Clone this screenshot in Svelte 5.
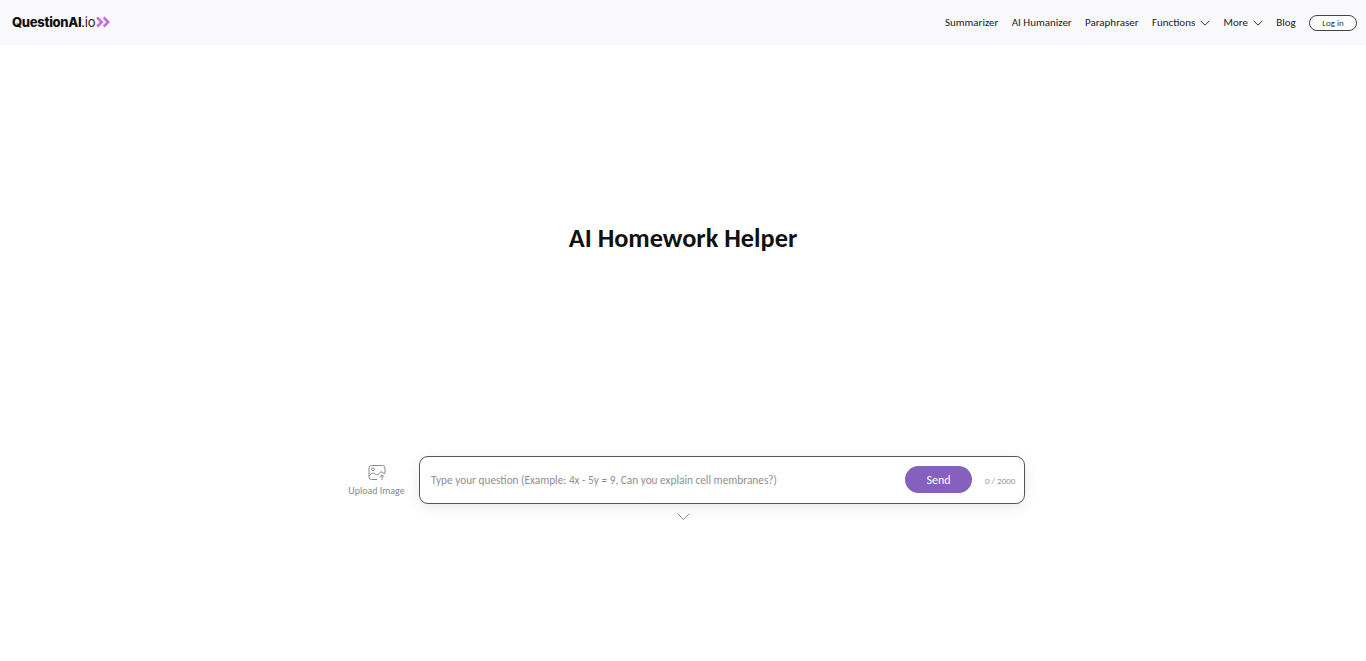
<script>
  const links = [
    { label: 'Summarizer' },
    { label: 'AI Humanizer' },
    { label: 'Paraphraser' },
    { label: 'Functions', menu: true },
    { label: 'More', menu: true },
    { label: 'Blog' }
  ];
</script>

<div class="page">
  <header class="topbar">
    <a class="logo" href="#top">
      <span class="logo-name">QuestionAI</span><span class="logo-tld">.io</span>
      <svg class="logo-mark" width="14" height="12" viewBox="0 0 14 12" aria-hidden="true">
        <path d="M1.200 1.500 5.700 6l-4.500 4.500M7.700 1.500 12.200 6l-4.500 4.500" fill="none" stroke="#c56fdc" stroke-width="2.600" />
      </svg>
    </a>
    <nav class="nav">
      {#each links as link}
        <a class="nav-link" href="#top">
          {link.label}
          {#if link.menu}
            <svg class="caret" width="10" height="6" viewBox="0 0 10 6" aria-hidden="true">
              <path d="M.5.700 5 5.200 9.500.700" fill="none" stroke="#333" stroke-width="1" />
            </svg>
          {/if}
        </a>
      {/each}
      <button class="login" type="button">Log in</button>
    </nav>
  </header>

  <main class="main">
    <h1 class="title">AI Homework Helper</h1>

    <div class="composer-row">
      <div class="upload">
        <svg width="18" height="17" viewBox="0 0 18 16" aria-hidden="true">
          <g fill="none" stroke="#8a8a8a" stroke-width="1">
            <path d="M9 15H3.500A2.500 2.500 0 0 1 1 12.500V3.500A2.500 2.500 0 0 1 3.500 1h11A2.500 2.500 0 0 1 17 3.500V9" />
            <circle cx="5" cy="4.800" r="1.400" />
            <path d="M1 11.500c2-3 4-3.500 6-2s4 .5 6-2.500l4 2.500" />
            <path d="M14 15.500v-5M11.800 12.500 14 10.300l2.200 2.200" />
          </g>
        </svg>
        <span>Upload Image</span>
      </div>

      <div class="composer">
        <span class="placeholder">Type your question (Example: 4x - 5y = 9, Can you explain cell membranes?)</span>
        <button class="send" type="button">Send</button>
        <span class="count">0 / 2000</span>
      </div>
    </div>

    <svg class="more" width="13" height="8" viewBox="0 0 13 8" aria-hidden="true">
      <path d="M.7.700 6.500 6.500 12.300.700" fill="none" stroke="#888" stroke-width="1" />
    </svg>
  </main>
</div>

<style>
  :global(body) {
    margin: 0;
    background: #fff;
    font-family: Carlito, Lato, "Liberation Sans", sans-serif;
  }

  .page {
    height: 661px;
    overflow: hidden;
  }

  .topbar {
    height: 45px;
    background: #f9f9fc;
    display: flex;
    align-items: center;
    justify-content: space-between;
    padding: 0 9px 0 12px;
  }

  .logo {
    display: flex;
    align-items: center;
    font-family: Inter, sans-serif;
    font-size: 13px;
    letter-spacing: -0.3px;
    color: #111;
    text-decoration: none;
    margin-top: -2px;
  }

  .logo-name {
    font-weight: 800;
  }

  .logo-tld {
    font-weight: 400;
    color: #222;
  }

  .logo-mark {
    margin-left: 1px;
  }

  .nav {
    display: flex;
    align-items: center;
    gap: 13.300px;
  }

  .nav-link {
    display: flex;
    align-items: center;
    gap: 4px;
    font-size: 11px;
    color: #222;
    text-decoration: none;
  }

  .caret {
    margin-left: 1px;
  }

  .login {
    width: 48px;
    height: 16px;
    padding: 0;
    border: 1px solid #444;
    border-radius: 8px;
    background: #fff;
    font: 9px Carlito, Lato, sans-serif;
    color: #333;
  }

  .main {
    display: flex;
    flex-direction: column;
    align-items: center;
  }

  .title {
    margin: 176px 0 0;
    font-size: 26.300px;
    line-height: 34px;
    font-weight: 700;
    color: #111;
  }

  .composer-row {
    margin-top: 201px;
    margin-left: 7px;
    display: flex;
    align-items: center;
    gap: 14px;
  }

  .upload {
    display: flex;
    flex-direction: column;
    align-items: center;
    gap: 3px;
    width: 57px;
    font-size: 10px;
    color: #888;
    white-space: nowrap;
  }

  .composer {
    width: 606px;
    height: 48px;
    box-sizing: border-box;
    display: flex;
    align-items: center;
    padding: 0 10px 0 11px;
    border: 1px solid #555;
    border-radius: 9px;
    background: #fff;
    box-shadow: 0 3px 14px rgba(0, 0, 0, 0.09);
  }

  .placeholder {
    flex: 1;
    font-size: 11.300px;
    color: #8f8f8f;
    white-space: nowrap;
    padding-bottom: 1px;
  }

  .send {
    width: 67px;
    height: 27px;
    padding: 0;
    border: 0;
    border-radius: 14px;
    background: #8560bf;
    color: #fff;
    font: 12px Carlito, Lato, sans-serif;
    margin-bottom: 1px;
  }

  .count {
    margin-left: 13px;
    font-size: 9px;
    color: #999;
    white-space: nowrap;
    width: 29px;
  }

  .more {
    margin-top: 9px;
    margin-left: 1px;
  }
</style>
